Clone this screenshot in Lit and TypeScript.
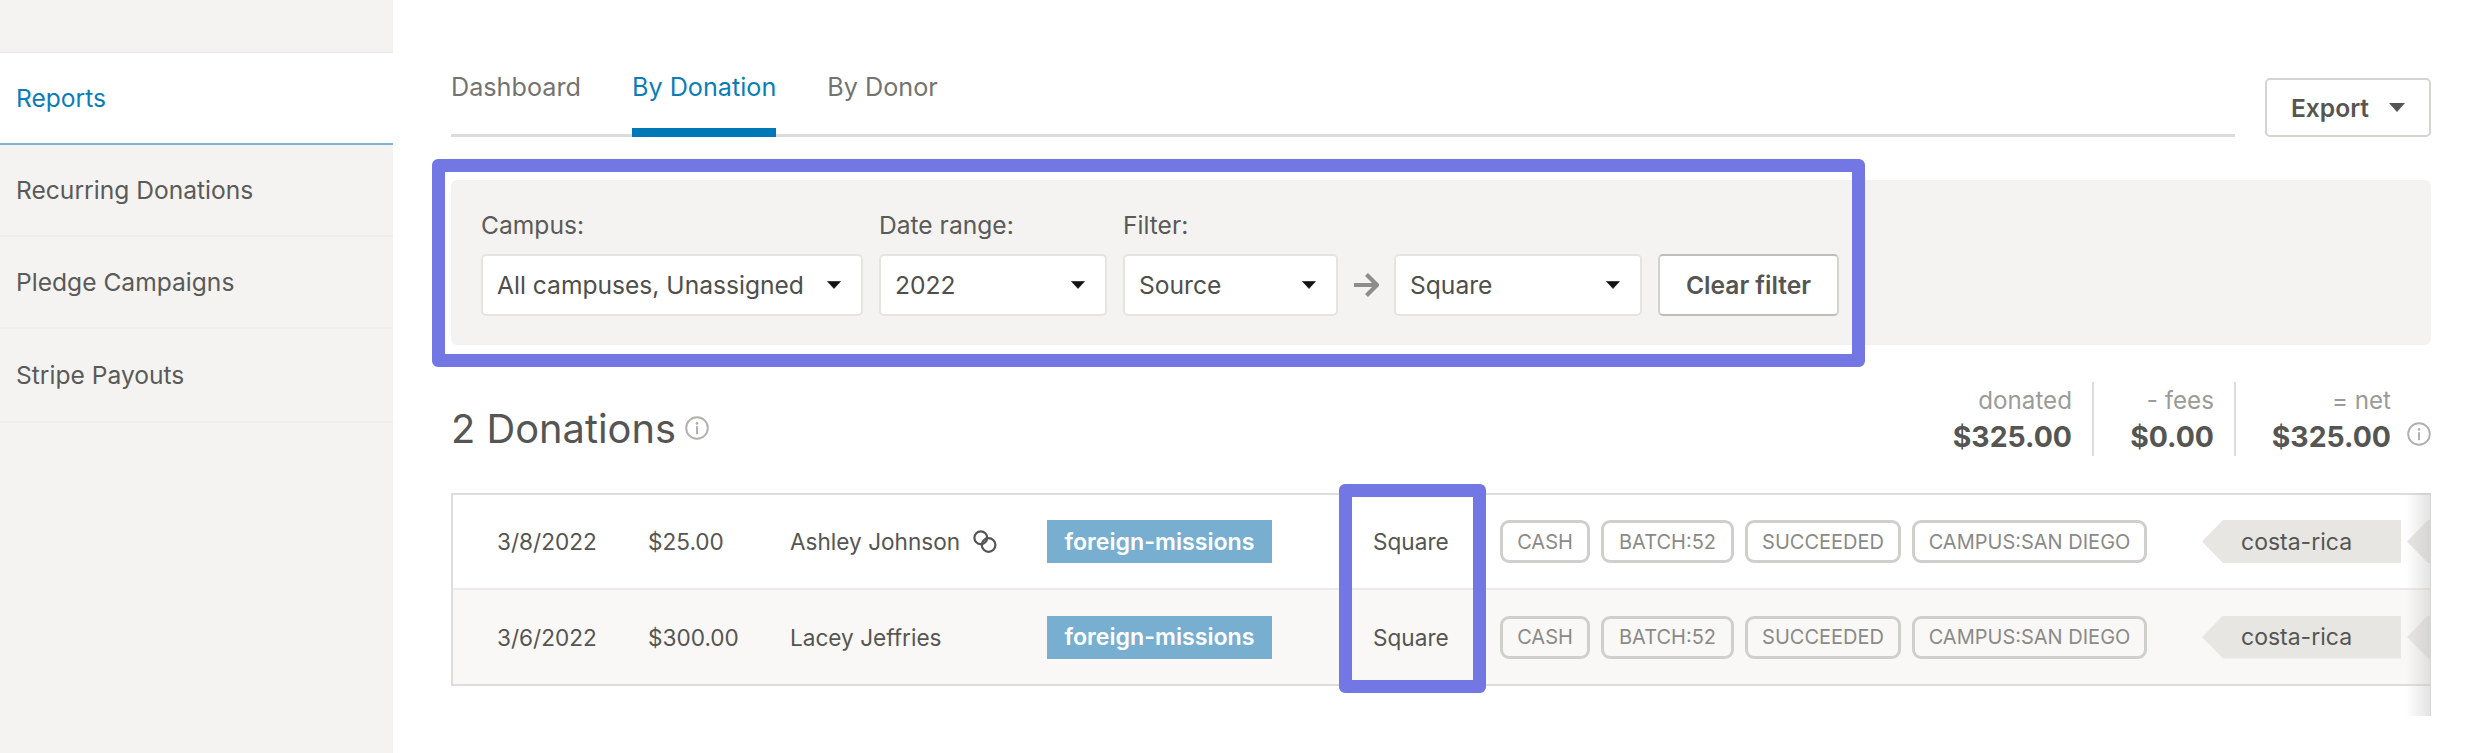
import { LitElement, html, css } from "lit";
import { customElement } from "lit/decorators.js";

const info = (size: number) => html`<svg class="info" width=${size} height=${size} viewBox="0 0 24 24" fill="none">
  <circle cx="12" cy="12" r="10.8" stroke="#b0b0ac" stroke-width="1.9"></circle>
  <circle cx="12" cy="7.4" r="1.3" fill="#b0b0ac"></circle>
  <rect x="11" y="10.2" width="2" height="8" fill="#b0b0ac"></rect>
</svg>`;

const caret = html`<svg class="caret" width="14" height="8" viewBox="0 0 14 8"><path d="M0.5 0.5H13.5L7 7.5Z" fill="#111" stroke="#111" stroke-width="0.6" stroke-linejoin="round"></path></svg>`;

const rows = [
  { date: "3/8/2022", amount: "$25.00", name: "Ashley Johnson", link: true },
  { date: "3/6/2022", amount: "$300.00", name: "Lacey Jeffries", link: false },
];
const badges = ["CASH", "BATCH:52", "SUCCEEDED", "CAMPUS:SAN DIEGO"];

@customElement("app-root")
export class AppRoot extends LitElement {
  static styles = css`
    :host {
      display: block;
      width: 2481px;
      height: 753px;
      overflow: hidden;
      background: #fff;
      font-family: Inter, "Liberation Sans", sans-serif;
      font-size: 24.6px;
      color: #555553;
      position: relative;
    }
    .layout { display: grid; grid-template-columns: 393px 1fr; height: 753px; }
    .side { background: #f4f3f1; padding-top: 52px; }
    .side a {
      display: flex; align-items: center; height: 92px; padding-left: 16px;
      border-bottom: 2px solid #eeedeb; box-sizing: border-box; color: #5a5a58;
    }
    .side a.active { background: #fff; color: #0a7db8; border-top: 1px solid #ecebe9; border-bottom: 2px solid #7fb4d3; height: 93px; }
    .side a:last-child { height: 94px; }
    .main { padding: 0 50px 0 58px; min-width: 0; }
    .top { display: flex; align-items: flex-end; gap: 30px; padding-top: 78px; }
    .tabs { flex: 1; display: flex; gap: 51px; height: 59px; border-bottom: 3px solid #dcdcda; box-sizing: border-box; }
    .tab { height: 59px; box-sizing: border-box; color: #737371; line-height: 18px; font-size: 25.2px; }
    .tab.active { color: #0a7db8; border-bottom: 9px solid #0077b6; }
    .export {
      width: 166px; height: 59px; box-sizing: border-box; background: #fff;
      border: 2px solid #d4d4d1; border-radius: 5px; display: flex; align-items: center;
      justify-content: center; gap: 20px; font-weight: 600; color: #555553;
    }
    .panel {
      margin-top: 43px; height: 165px; box-sizing: border-box; background: #f4f3f1;
      border-radius: 6px; padding: 31px 30px 0; display: flex; gap: 16px;
    }
    .field { display: flex; flex-direction: column; gap: 15px; }
    .field label { line-height: 28px; color: #5a5a58; }
    .controls { display: flex; align-items: center; }
    .select {
      height: 62px; box-sizing: border-box; background: #fff; border: 2px solid #e5e4e1;
      border-radius: 5px; display: flex; align-items: center; justify-content: space-between;
      padding: 0 20px 0 14px; color: #4e4e4c;
    }
    .arrow { margin: 0 15px; display: block; flex: none; }
    .clear {
      width: 181px; height: 62px; margin-left: 16px; box-sizing: border-box; background: #fff;
      border: 2px solid #d2d2cf; border-top-color: #bdbdba; border-bottom-color: #bdbdba; border-radius: 5px; display: flex;
      align-items: center; justify-content: center; font-weight: 600; color: #555553;
    }
    .summary { display: flex; justify-content: space-between; height: 74px; margin-top: 37px; }
    .title { display: flex; align-items: center; gap: 9px; font-size: 39.8px; color: #555553; padding-top: 18px; }
    .totals { display: flex; align-items: stretch; }
    .total { display: flex; flex-direction: column; align-items: flex-end; justify-content: center; padding: 0 20px 0 0; box-sizing: border-box; border-right: 2px solid #dcdcda; font-size: 24.2px; }
    .total.d { width: 121px; }
    .total.f { width: 142px; }
    .total.n { width: 171px; border-right: 0; padding-right: 16px; }
    .total span { color: #9b9b99; line-height: 36px; }
    .total b { font-size: 28.4px; font-weight: 700; color: #555553; line-height: 36px; }
    .totals .info { align-self: center; margin-top: 29px; }
    .tablewrap { position: relative; margin-top: 37px; height: 223px; overflow: hidden; }
    .table { border: solid #dedddb; border-width: 2px 0 4px 2px; box-sizing: border-box; height: 193px; font-size: 22.6px; }
    .row { height: 93px; display: flex; align-items: center; background: #fff; padding-left: 44px; white-space: nowrap; }
    .row + .row { background: #f9f8f6; border-top: 2px solid #ebeae8; height: 94px; }
    .row > * { flex: none; }
    .date { width: 151px; }
    .amount { width: 142px; }
    .name { width: 257px; display: flex; align-items: center; gap: 13px; }
    .tag { width: 225px; height: 43px; background: #78afd0; color: #fff; font-weight: 600; font-size: 23.2px; display: flex; align-items: center; justify-content: center; }
    .source { margin-left: 101px; width: 127px; }
    .badges { display: flex; gap: 11px; width: 702px; }
    .badge {
      height: 43px; box-sizing: border-box; border: 3px solid #cfcfcc; border-radius: 9px;
      display: flex; align-items: center; justify-content: center; font-size: 20px; color: #8a8a88;
    }
    .pill {
      width: 199px; height: 43px; background: #e7e6e3; color: #555553; font-size: 23px;
      clip-path: polygon(21px 0, 100% 0, 100% 100%, 21px 100%, 0 50%);
      display: flex; align-items: center; padding-left: 39px; box-sizing: border-box;
    }
    .pill + .pill { margin-left: 6px; }
    .fade {
      position: absolute; right: 0; top: 0; bottom: 0; width: 24px;
      background: linear-gradient(to right, rgba(190,190,188,0), rgba(190,190,188,0.42));
      border-right: 1px solid #d4d4d2;
    }
    .frame { position: absolute; box-sizing: border-box; border: 13px solid #7277e4; border-radius: 6px; pointer-events: none; }
    .frame.a { left: 432px; top: 159px; width: 1433px; height: 208px; }
    .frame.b { left: 1339px; top: 484px; width: 147px; height: 209px; }
  `;

  render() {
    const widths: Record<string, number> = { CASH: 90, "BATCH:52": 133, SUCCEEDED: 156, "CAMPUS:SAN DIEGO": 235 };
    return html`
      <div class="layout">
        <nav class="side">
          <a class="active">Reports</a>
          <a>Recurring Donations</a>
          <a>Pledge Campaigns</a>
          <a>Stripe Payouts</a>
        </nav>
        <main class="main">
          <div class="top">
            <div class="tabs">
              <div class="tab">Dashboard</div>
              <div class="tab active">By Donation</div>
              <div class="tab">By Donor</div>
            </div>
            <div class="export">Export
              <svg width="16" height="9" viewBox="0 0 16 9"><path d="M0 0H16L8 9Z" fill="#555553"></path></svg>
            </div>
          </div>
          <section class="panel">
            <div class="field"><label>Campus:</label>
              <div class="select" style="width:382px">All campuses, Unassigned ${caret}</div></div>
            <div class="field"><label>Date range:</label>
              <div class="select" style="width:228px">2022 ${caret}</div></div>
            <div class="field"><label>Filter:</label>
              <div class="controls">
                <div class="select" style="width:215px">Source ${caret}</div>
                <svg class="arrow" width="26" height="26" viewBox="0 0 26 26" fill="none">
                  <path d="M1 13H23M13.5 2.5L24 13L13.5 23.5" stroke="#8d8d8b" stroke-width="4.2"></path>
                </svg>
                <div class="select" style="width:248px">Square ${caret}</div>
                <div class="clear">Clear filter</div>
              </div></div>
          </section>
          <div class="summary">
            <div class="title">2 Donations ${info(24)}</div>
            <div class="totals">
              <div class="total d"><span>donated</span><b>$325.00</b></div>
              <div class="total f"><span>- fees</span><b>$0.00</b></div>
              <div class="total n"><span>= net</span><b>$325.00</b></div>
              ${info(24)}
            </div>
          </div>
          <div class="tablewrap">
            <div class="table">
              ${rows.map((r) => html`
                <div class="row">
                  <div class="date">${r.date}</div>
                  <div class="amount">${r.amount}</div>
                  <div class="name">${r.name}${r.link ? html`
                    <svg class="link" width="24" height="24" viewBox="0 0 24 24" fill="none" stroke="#555553" stroke-width="2.2">
                      <circle cx="7.8" cy="7.8" r="6.4"></circle><circle cx="15.6" cy="15" r="6.8"></circle>
                    </svg>` : ""}</div>
                  <div class="tag">foreign-missions</div>
                  <div class="source">Square</div>
                  <div class="badges">${badges.map((b) => html`<div class="badge" style="width:${widths[b]}px">${b}</div>`)}</div>
                  <div class="pill">costa-rica</div>
                  <div class="pill"></div>
                </div>`)}
            </div>
            <div class="fade"></div>
          </div>
        </main>
      </div>
      <div class="frame a"></div>
      <div class="frame b"></div>
    `;
  }
}
